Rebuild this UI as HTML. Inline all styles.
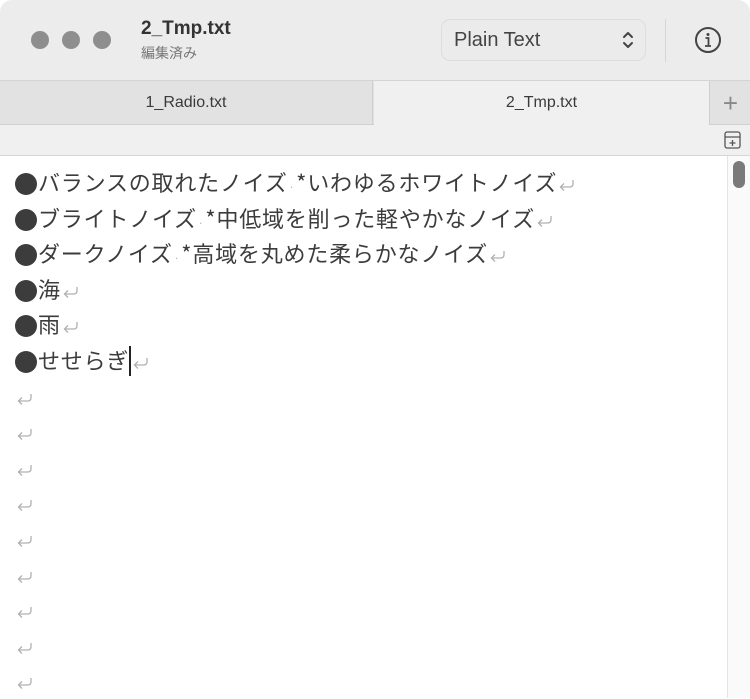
<!DOCTYPE html>
<html><head><meta charset="utf-8"><style>
*{margin:0;padding:0;box-sizing:border-box}
body{width:750px;height:698px;overflow:hidden;background:#fff;font-family:"Liberation Sans","Noto Sans CJK JP",sans-serif;position:relative}
.title{position:absolute;left:0;top:0;width:750px;height:80px;background:#ececec;border-radius:12px 12px 0 0}
.dot{position:absolute;top:31px;width:18px;height:18px;border-radius:50%;background:#8e8e8e}
.tabs{position:absolute;top:80px;left:0;width:750px;height:45px;background:#e2e2e2;border-top:1px solid #d4d4d4;border-bottom:1px solid #d0d0d0}
.tab{position:absolute;top:0;height:44px;line-height:44px;text-align:center;font-size:16px;color:#3a3a3a}
.bar{position:absolute;top:125px;left:0;width:750px;height:31px;background:#f0f0f0;border-bottom:1px solid #d6d6d6}
.text{position:absolute;top:165px;left:15px;font-size:22px;color:#3c3c3c;white-space:nowrap;font-family:"Noto Sans CJK JP",sans-serif;letter-spacing:0.8px}
.text div{height:35.6px;line-height:35.6px;overflow:visible}
.b{display:inline-block;width:22px;height:22px;border-radius:50%;background:#3c3c3c;vertical-align:-4px;margin-right:1px}
.rt{display:inline-block;width:18px;height:14px;vertical-align:-1px;margin-left:1px}
.sm{color:#aaa;font-size:10px;margin:0 1px}
.sb{position:absolute;left:727px;top:156px;width:23px;height:542px;border-left:1px solid #e4e4e4;background:#fafafa}
</style></head><body>
<div class="title">
<div class="dot" style="left:31px"></div><div class="dot" style="left:62px"></div><div class="dot" style="left:93px"></div>
<div style="position:absolute;left:141px;top:18px;font-size:19px;font-weight:bold;color:#333">2_Tmp.txt</div>
<div style="position:absolute;left:141px;top:43px;font-size:14px;color:#777">編集済み</div>
<div style="position:absolute;left:441px;top:19px;width:205px;height:42px;border:1px solid #ddd;border-radius:9px;background:#ebebeb;font-size:20px;color:#444;line-height:40px;padding-left:12px">Plain Text
<svg style="position:absolute;right:10px;top:9px" width="14" height="22" viewBox="0 0 14 22"><path d="M3 8l4-4 4 4M3 14l4 4 4-4" fill="none" stroke="#444" stroke-width="2" stroke-linecap="round" stroke-linejoin="round"/></svg></div>
<div style="position:absolute;left:665px;top:19px;width:1px;height:43px;background:#d6d6d6"></div>
<svg style="position:absolute;left:694px;top:26px" width="28" height="28" viewBox="0 0 28 28"><circle cx="14" cy="14" r="12" fill="none" stroke="#444" stroke-width="2"/><circle cx="14" cy="8.5" r="1.5" fill="#444"/><path d="M11.5 12h3v8M11 20h6" fill="none" stroke="#444" stroke-width="1.8"/></svg>
</div>
<div class="tabs">
<div class="tab" style="left:0;width:373px;border-right:1px solid #cfcfcf">1_Radio.txt</div>
<div class="tab" style="left:374px;width:336px;background:#f0f0f0;border-right:1px solid #cfcfcf;height:45px">2_Tmp.txt</div>
<div class="tab" style="left:711px;width:39px;font-size:26px;color:#888;font-weight:300">+</div>
</div>
<div class="bar"><svg style="position:absolute;left:724px;top:6px" width="17" height="18" viewBox="0 0 17 18"><rect x="1" y="1" width="15" height="16" rx="2" fill="none" stroke="#555" stroke-width="1.3"/><path d="M1 6h15M8.5 9v6M5.5 12h6" stroke="#555" stroke-width="1.3"/></svg></div>
<div class="sb"><div style="position:absolute;left:5px;top:5px;width:12px;height:27px;border-radius:6px;background:#7a7a7a"></div></div>
<svg width="0" height="0" style="position:absolute"><defs><symbol id="r" viewBox="0 0 18 14"><path d="M15 2v4a3 3 0 0 1-3 3H3M6 5.5L2.5 9 6 12.5" fill="none" stroke="#b0b0b0" stroke-width="1.3"/></symbol></defs></svg>
<div class="text">
<div><span class="b"></span>バランスの取れたノイズ<span class="sm">·</span>*いわゆるホワイトノイズ<svg class="rt"><use href="#r"/></svg></div>
<div><span class="b"></span>ブライトノイズ<span class="sm">·</span>*中低域を削った軽やかなノイズ<svg class="rt"><use href="#r"/></svg></div>
<div><span class="b"></span>ダークノイズ<span class="sm">·</span>*高域を丸めた柔らかなノイズ<svg class="rt"><use href="#r"/></svg></div>
<div><span class="b"></span>海<svg class="rt"><use href="#r"/></svg></div>
<div><span class="b"></span>雨<svg class="rt"><use href="#r"/></svg></div>
<div><span class="b"></span>せせらぎ<span style="display:inline-block;width:1.5px;height:30px;background:#222;vertical-align:-7px"></span><svg class="rt"><use href="#r"/></svg></div>
<div><svg class="rt"><use href="#r"/></svg></div><div><svg class="rt"><use href="#r"/></svg></div><div><svg class="rt"><use href="#r"/></svg></div><div><svg class="rt"><use href="#r"/></svg></div><div><svg class="rt"><use href="#r"/></svg></div><div><svg class="rt"><use href="#r"/></svg></div><div><svg class="rt"><use href="#r"/></svg></div><div><svg class="rt"><use href="#r"/></svg></div><div><svg class="rt"><use href="#r"/></svg></div>
</div>
</body></html>
